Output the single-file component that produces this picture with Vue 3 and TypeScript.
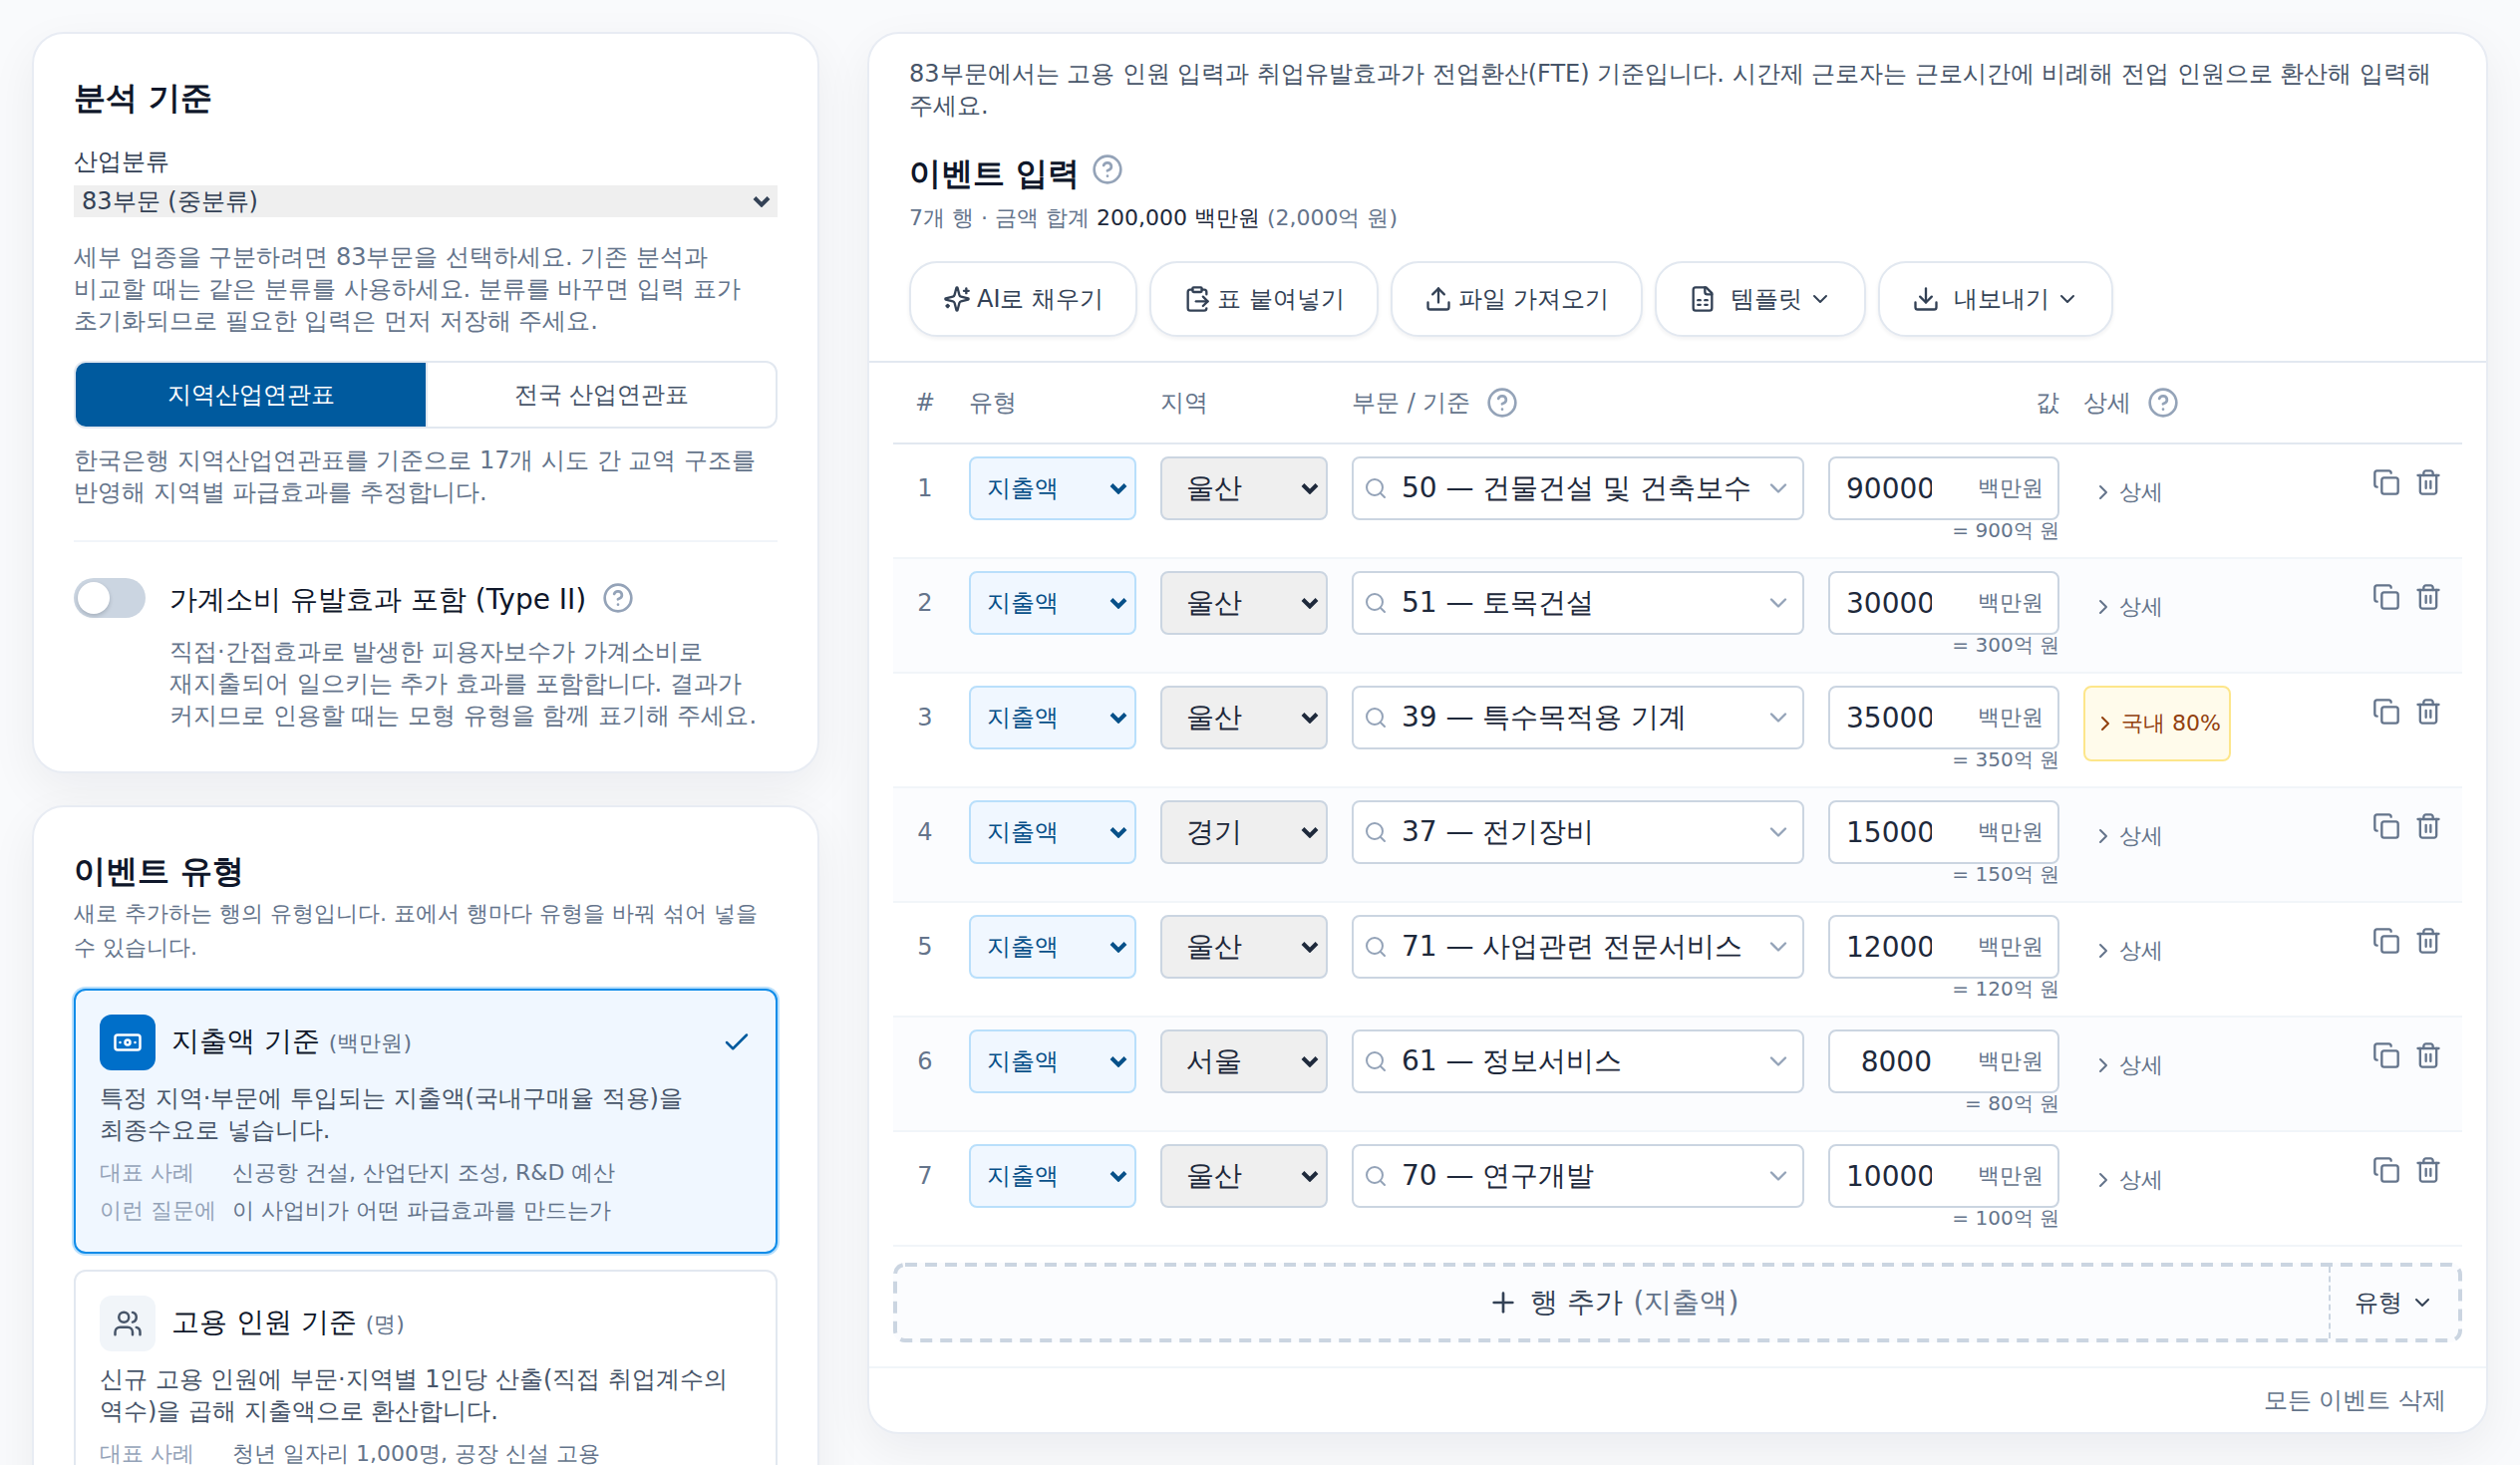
<script setup lang="ts">
import { ref } from 'vue'

type IconName =
  | 'help' | 'sparkles' | 'paste' | 'upload' | 'sheet' | 'download' | 'down' | 'right'
  | 'search' | 'copy' | 'trash' | 'plus' | 'check' | 'banknote' | 'users'

const icons: Record<IconName, string[]> = {
  help: ['M12 2a10 10 0 1 0 0 20a10 10 0 1 0 0-20Z', 'M9.09 9a3 3 0 0 1 5.83 1c0 2-3 3-3 3', 'M12 17h.01'],
  sparkles: [
    'M9.937 15.5A2 2 0 0 0 8.5 14.063l-6.135-1.582a.5.5 0 0 1 0-.962L8.5 9.936A2 2 0 0 0 9.937 8.5l1.582-6.135a.5.5 0 0 1 .963 0L14.063 8.5A2 2 0 0 0 15.5 9.937l6.135 1.581a.5.5 0 0 1 0 .964L15.5 14.063a2 2 0 0 0-1.437 1.437l-1.582 6.135a.5.5 0 0 1-.963 0z',
    'M20 3v4', 'M22 5h-4', 'M4 17v2', 'M5 18H3',
  ],
  paste: [
    'M9 2h6a1 1 0 0 1 1 1v2a1 1 0 0 1-1 1H9a1 1 0 0 1-1-1V3a1 1 0 0 1 1-1Z',
    'M8 4H6a2 2 0 0 0-2 2v14a2 2 0 0 0 2 2h12a2 2 0 0 0 2-2', 'M16 4h2a2 2 0 0 1 2 2v2', 'M11 14h10', 'm17 10 4 4-4 4',
  ],
  upload: ['M21 15v4a2 2 0 0 1-2 2H5a2 2 0 0 1-2-2v-4', 'm17 8-5-5-5 5', 'M12 3v12'],
  download: ['M21 15v4a2 2 0 0 1-2 2H5a2 2 0 0 1-2-2v-4', 'm7 10 5 5 5-5', 'M12 15V3'],
  sheet: [
    'M15 2H6a2 2 0 0 0-2 2v16a2 2 0 0 0 2 2h12a2 2 0 0 0 2-2V7Z', 'M14 2v4a2 2 0 0 0 2 2h4',
    'M8 13h2', 'M14 13h2', 'M8 17h2', 'M14 17h2',
  ],
  down: ['m6 9 6 6 6-6'],
  right: ['m9 18 6-6-6-6'],
  search: ['M11 3a8 8 0 1 0 0 16a8 8 0 1 0 0-16Z', 'm21 21-4.3-4.3'],
  copy: [
    'M10 8h10a2 2 0 0 1 2 2v10a2 2 0 0 1-2 2H10a2 2 0 0 1-2-2V10a2 2 0 0 1 2-2Z',
    'M4 16c-1.1 0-2-.9-2-2V4c0-1.1.9-2 2-2h10c1.1 0 2 .9 2 2',
  ],
  trash: ['M3 6h18', 'M19 6v14c0 1-1 2-2 2H7c-1 0-2-1-2-2V6', 'M8 6V4c0-1 1-2 2-2h4c1 0 2 1 2 2v2', 'M10 11v6', 'M14 11v6'],
  plus: ['M5 12h14', 'M12 5v14'],
  check: ['M20 6 9 17l-5-5'],
  banknote: [
    'M4 6h16a2 2 0 0 1 2 2v8a2 2 0 0 1-2 2H4a2 2 0 0 1-2-2V8a2 2 0 0 1 2-2Z',
    'M12 10a2 2 0 1 0 0 4a2 2 0 1 0 0-4Z', 'M6 12h.01', 'M18 12h.01',
  ],
  users: [
    'M16 21v-2a4 4 0 0 0-4-4H6a4 4 0 0 0-4 4v2', 'M9 3a4 4 0 1 0 0 8a4 4 0 1 0 0-8Z',
    'M22 21v-2a4 4 0 0 0-3-3.87', 'M16 3.13a4 4 0 0 1 0 7.75',
  ],
}

interface ToolButton { icon: IconName; label: string; menu: boolean }
const tools: ToolButton[] = [
  { icon: 'sparkles', label: 'AI로 채우기', menu: false },
  { icon: 'paste', label: '표 붙여넣기', menu: false },
  { icon: 'upload', label: '파일 가져오기', menu: false },
  { icon: 'sheet', label: '템플릿', menu: true },
  { icon: 'download', label: '내보내기', menu: true },
]

interface EventRow { region: string; sector: string; value: string; hint: string; detail?: string }
const rows = ref<EventRow[]>([
  { region: '울산', sector: '50 — 건물건설 및 건축보수', value: '90000', hint: '900' },
  { region: '울산', sector: '51 — 토목건설', value: '30000', hint: '300' },
  { region: '울산', sector: '39 — 특수목적용 기계', value: '35000', hint: '350', detail: '국내 80%' },
  { region: '경기', sector: '37 — 전기장비', value: '15000', hint: '150' },
  { region: '울산', sector: '71 — 사업관련 전문서비스', value: '12000', hint: '120' },
  { region: '서울', sector: '61 — 정보서비스', value: '8000', hint: '80' },
  { region: '울산', sector: '70 — 연구개발', value: '10000', hint: '100' },
])

interface EventKind { id: string; icon: IconName; name: string; unit: string; text: string; facts: [string, string][] }
const kinds: EventKind[] = [
  {
    id: 'spend', icon: 'banknote', name: '지출액 기준', unit: '(백만원)',
    text: '특정 지역·부문에 투입되는 지출액(국내구매율 적용)을 최종수요로 넣습니다.',
    facts: [['대표 사례', '신공항 건설, 산업단지 조성, R&D 예산'], ['이런 질문에', '이 사업비가 어떤 파급효과를 만드는가']],
  },
  {
    id: 'jobs', icon: 'users', name: '고용 인원 기준', unit: '(명)',
    text: '신규 고용 인원에 부문·지역별 1인당 산출(직접 취업계수의 역수)을 곱해 지출액으로 환산합니다.',
    facts: [['대표 사례', '청년 일자리 1,000명, 공장 신설 고용']],
  },
]

const kind = ref('spend')
const scope = ref('region')
const typeTwo = ref(false)
</script>

<template>
  <main class="page">
    <div class="side">
      <section class="card panel">
        <h2>분석 기준</h2>
        <label class="field-label" for="classification">산업분류</label>
        <div class="select-wrap plain">
          <select id="classification"><option>83부문 (중분류)</option></select>
          <svg class="arrow" viewBox="0 0 18 12"><path d="M2 2.500l7 7 7-7" /></svg>
        </div>
        <p class="note">세부 업종을 구분하려면 83부문을 선택하세요. 기존 분석과 비교할 때는 같은 분류를 사용하세요. 분류를 바꾸면 입력 표가 초기화되므로 필요한 입력은 먼저 저장해 주세요.</p>
        <div class="segments">
          <button type="button" :class="{ on: scope === 'region' }" @click="scope = 'region'">지역산업연관표</button>
          <button type="button" :class="{ on: scope === 'nation' }" @click="scope = 'nation'">전국 산업연관표</button>
        </div>
        <p class="note tight">한국은행 지역산업연관표를 기준으로 17개 시도 간 교역 구조를 반영해 지역별 파급효과를 추정합니다.</p>
        <div class="toggle-row">
          <input id="type-two" v-model="typeTwo" class="switch" type="checkbox" role="switch" />
          <div>
            <div class="toggle-title">
              <label for="type-two">가계소비 유발효과 포함 (Type II)</label>
              <button type="button" class="help" aria-label="도움말">
                <svg class="icon" viewBox="0 0 24 24"><path v-for="d in icons.help" :key="d" :d="d" /></svg>
              </button>
            </div>
            <p class="note">직접·간접효과로 발생한 피용자보수가 가계소비로 재지출되어 일으키는 추가 효과를 포함합니다. 결과가 커지므로 인용할 때는 모형 유형을 함께 표기해 주세요.</p>
          </div>
        </div>
      </section>

      <section class="card panel">
        <h2>이벤트 유형</h2>
        <p class="sub">새로 추가하는 행의 유형입니다. 표에서 행마다 유형을 바꿔 섞어 넣을 수 있습니다.</p>
        <div class="kinds">
          <label v-for="k in kinds" :key="k.id" class="kind" :class="{ on: kind === k.id }">
            <input v-model="kind" class="hidden-radio" type="radio" name="kind" :value="k.id" />
            <span class="kind-head">
              <span class="tile">
                <svg class="icon" viewBox="0 0 24 24"><path v-for="d in icons[k.icon]" :key="d" :d="d" /></svg>
              </span>
              <span class="kind-name">{{ k.name }} <small>{{ k.unit }}</small></span>
              <svg v-if="kind === k.id" class="icon mark" viewBox="0 0 24 24"><path v-for="d in icons.check" :key="d" :d="d" /></svg>
            </span>
            <span class="kind-text">{{ k.text }}</span>
            <span v-for="f in k.facts" :key="f[0]" class="fact"><span class="term">{{ f[0] }}</span><span>{{ f[1] }}</span></span>
          </label>
        </div>
      </section>
    </div>

    <section class="card main">
      <header class="main-head">
        <p class="notice">83부문에서는 고용 인원 입력과 취업유발효과가 전업환산(FTE) 기준입니다. 시간제 근로자는 근로시간에 비례해 전업 인원으로 환산해 입력해 주세요.</p>
        <div class="title">
          <h2>이벤트 입력</h2>
          <button type="button" class="help" aria-label="도움말">
            <svg class="icon" viewBox="0 0 24 24"><path v-for="d in icons.help" :key="d" :d="d" /></svg>
          </button>
        </div>
        <p class="count">7개 행 · 금액 합계 <span>200,000 백만원</span> (2,000억 원)</p>
        <div class="tools">
          <button v-for="t in tools" :key="t.label" type="button" class="tool" :class="{ menu: t.menu }">
            <svg class="icon" viewBox="0 0 24 24"><path v-for="d in icons[t.icon]" :key="d" :d="d" /></svg>
            <span>{{ t.label }}</span>
            <svg v-if="t.menu" class="icon chev" viewBox="0 0 24 24"><path v-for="d in icons.down" :key="d" :d="d" /></svg>
          </button>
        </div>
      </header>

      <div class="sheet">
        <table>
          <colgroup>
            <col class="c-num" /><col class="c-pick" /><col class="c-pick" /><col class="c-sector" />
            <col class="c-value" /><col class="c-detail" /><col class="c-act" />
          </colgroup>
          <thead>
            <tr>
              <th class="num">#</th>
              <th>유형</th>
              <th>지역</th>
              <th>
                <span class="th-help">부문 / 기준
                  <button type="button" class="help" aria-label="도움말">
                    <svg class="icon" viewBox="0 0 24 24"><path v-for="d in icons.help" :key="d" :d="d" /></svg>
                  </button>
                </span>
              </th>
              <th class="right">값</th>
              <th>
                <span class="th-help">상세
                  <button type="button" class="help" aria-label="도움말">
                    <svg class="icon" viewBox="0 0 24 24"><path v-for="d in icons.help" :key="d" :d="d" /></svg>
                  </button>
                </span>
              </th>
              <th></th>
            </tr>
          </thead>
          <tbody>
            <tr v-for="(r, i) in rows" :key="i">
              <td class="num"><span>{{ i + 1 }}</span></td>
              <td>
                <div class="select-wrap kind-pick">
                  <select aria-label="유형"><option>지출액</option></select>
                  <svg class="arrow" viewBox="0 0 18 12"><path d="M2 2.500l7 7 7-7" /></svg>
                </div>
              </td>
              <td>
                <div class="select-wrap region-pick">
                  <select aria-label="지역"><option>{{ r.region }}</option></select>
                  <svg class="arrow" viewBox="0 0 18 12"><path d="M2 2.500l7 7 7-7" /></svg>
                </div>
              </td>
              <td>
                <div class="box sector">
                  <svg class="icon lens" viewBox="0 0 24 24"><path v-for="d in icons.search" :key="d" :d="d" /></svg>
                  <input v-model="r.sector" type="text" aria-label="부문" />
                  <svg class="icon" viewBox="0 0 24 24"><path v-for="d in icons.down" :key="d" :d="d" /></svg>
                </div>
              </td>
              <td>
                <div class="box amount">
                  <input v-model="r.value" type="text" inputmode="numeric" aria-label="값" />
                  <span class="unit">백만원</span>
                </div>
                <p class="hint">= {{ r.hint }}억 원</p>
              </td>
              <td>
                <button type="button" class="detail" :class="{ chip: r.detail }">
                  <svg class="icon" viewBox="0 0 24 24"><path v-for="d in icons.right" :key="d" :d="d" /></svg>
                  <span>{{ r.detail ?? '상세' }}</span>
                </button>
              </td>
              <td class="acts">
                <div>
                  <button type="button" aria-label="복제"><svg class="icon" viewBox="0 0 24 24"><path v-for="d in icons.copy" :key="d" :d="d" /></svg></button>
                  <button type="button" aria-label="삭제"><svg class="icon" viewBox="0 0 24 24"><path v-for="d in icons.trash" :key="d" :d="d" /></svg></button>
                </div>
              </td>
            </tr>
          </tbody>
        </table>

        <div class="add">
          <svg class="dashes" aria-hidden="true"><rect x="2" y="2" rx="10" /></svg>
          <button type="button" class="add-main">
            <svg class="icon" viewBox="0 0 24 24"><path v-for="d in icons.plus" :key="d" :d="d" /></svg>
            <span>행 추가</span>
            <span class="muted">(지출액)</span>
          </button>
          <button type="button" class="add-kind">
            <span>유형</span>
            <svg class="icon" viewBox="0 0 24 24"><path v-for="d in icons.down" :key="d" :d="d" /></svg>
          </button>
        </div>
      </div>

      <footer><button type="button">모든 이벤트 삭제</button></footer>
    </section>
  </main>
</template>

<style>
body {
  margin: 0;
  background: #f9fafc;
}
</style>

<style scoped>
.page,
.page * {
  box-sizing: border-box;
}
.page {
  display: grid;
  grid-template-columns: minmax(0, 790fr) minmax(0, 1626fr);
  align-items: start;
  gap: 48px;
  height: 100vh;
  padding: 32px;
  overflow: hidden;
  color: #1e293b;
  font-family: "DejaVu Sans", sans-serif;
  font-size: 24px;
  line-height: 32px;
  word-break: keep-all;
}
h2,
p {
  margin: 0;
}
button,
input,
select {
  margin: 0;
  padding: 0;
  border: 0;
  background: none;
  color: inherit;
  font: inherit;
}
.icon {
  flex: none;
  width: 28px;
  height: 28px;
  fill: none;
  stroke: currentColor;
  stroke-width: 2;
  stroke-linecap: round;
  stroke-linejoin: round;
}
.card {
  border: 2px solid #e8ecf3;
  border-radius: 32px;
  background: #fff;
  box-shadow: 0 16px 48px rgba(15, 23, 42, 0.06);
}
.side {
  display: grid;
  gap: 32px;
}
.panel {
  padding: 40px;
}
h2 {
  color: #0f172a;
  font-size: 32px;
  font-weight: 700;
  line-height: 48px;
}
.field-label {
  display: block;
  margin: 24px 0 8px;
  color: #334155;
}
.select-wrap {
  position: relative;
}
.select-wrap select {
  display: block;
  width: 100%;
  appearance: none;
}
.arrow {
  position: absolute;
  top: 0;
  right: 9px;
  bottom: 0;
  width: 18px;
  height: 12px;
  margin: auto 0;
  fill: none;
  stroke: currentColor;
  stroke-width: 4;
  pointer-events: none;
}
.plain {
  color: #334155;
}
.plain select {
  height: 32px;
  padding: 0 8px;
  background: #efefef;
}
.plain .arrow {
  right: 7px;
}
.note {
  margin-top: 24px;
  color: #64748b;
}
.segments {
  display: grid;
  grid-template-columns: 1fr 1fr;
  height: 68px;
  margin-top: 24px;
  border: 2px solid #e2e8f0;
  border-radius: 12px;
  overflow: hidden;
  color: #475569;
}
.segments button + button {
  border-left: 2px solid #e2e8f0;
}
.segments .on {
  background: #005a9e;
  color: #fff;
}
.note.tight {
  margin-top: 16px;
}
.toggle-row {
  display: grid;
  grid-template-columns: 72px 1fr;
  gap: 24px;
  margin-top: 32px;
  padding-top: 36px;
  border-top: 2px solid #f1f5f9;
}
.switch {
  display: block;
  width: 72px;
  height: 40px;
  padding: 4px;
  border-radius: 20px;
  background: #cbd5e1;
  appearance: none;
}
.switch::before {
  display: block;
  width: 32px;
  height: 32px;
  border-radius: 50%;
  background: #fff;
  box-shadow: 0 2px 4px rgba(15, 23, 42, 0.2);
  content: "";
}
.toggle-title {
  display: flex;
  align-items: flex-start;
  gap: 12px;
  color: #0f172a;
  font-size: 28px;
  line-height: 44px;
}
.help {
  display: flex;
  align-items: center;
  justify-content: center;
  width: 40px;
  height: 40px;
  color: #94a3b8;
}
.help .icon {
  width: 32px;
  height: 32px;
}
.toggle-row .note {
  margin-top: 14px;
}
.sub {
  color: #64748b;
  font-size: 22px;
  line-height: 34px;
  margin-top: 2px;
}
.kinds {
  display: grid;
  gap: 16px;
  margin-top: 24px;
}
.kind {
  position: relative;
  display: block;
  padding: 24px;
  border: 2px solid #e2e8f0;
  border-radius: 12px;
}
.kind.on {
  border-color: #0f8ce9;
  background: #f0f7ff;
  box-shadow: 0 0 0 2px #b9dffb;
}
.hidden-radio {
  position: absolute;
  opacity: 0;
}
.kind-head {
  display: flex;
  align-items: center;
  gap: 16px;
}
.tile {
  display: flex;
  align-items: center;
  justify-content: center;
  width: 56px;
  height: 56px;
  border-radius: 12px;
  background: #f1f5f9;
  color: #475569;
}
.on .tile {
  background: #006fc9;
  color: #fff;
}
.tile .icon,
.mark {
  width: 30px;
  height: 30px;
}
.kind-name {
  flex: 1;
  color: #0f172a;
  font-size: 28px;
}
.kind-name small {
  color: #64748b;
  font-size: 22px;
}
.mark {
  color: #005a9e;
}
.kind-text {
  display: block;
  margin: 12px 0 10px;
  color: #475569;
}
.fact {
  display: flex;
  gap: 16px;
  color: #64748b;
  font-size: 22px;
  line-height: 34px;
}
.fact + .fact {
  margin-top: 4px;
}
.term {
  width: 117px;
  color: #94a3b8;
  white-space: nowrap;
}
.main-head {
  padding: 24px 40px;
  border-bottom: 2px solid #e2e8f0;
}
.notice {
  color: #475569;
}
.title {
  display: flex;
  align-items: flex-start;
  gap: 8px;
  margin-top: 28px;
}
.count {
  margin-top: 4px;
  color: #64748b;
  font-size: 22px;
  line-height: 34px;
}
.count span {
  color: #1e293b;
}
.tools {
  display: flex;
  flex-wrap: wrap;
  gap: 12px;
  margin-top: 26px;
}
.tool {
  display: flex;
  align-items: center;
  gap: 6px;
  height: 76px;
  padding: 0 32px;
  border: 2px solid #e2e8f0;
  border-radius: 28px;
  background: #fff;
  color: #334155;
  box-shadow: 0 2px 4px rgba(15, 23, 42, 0.06);
}
.tool.menu .icon:first-child {
  margin-right: 8px;
}
.icon.chev {
  width: 24px;
  height: 24px;
}
.sheet {
  padding: 0 24px 24px;
}
table {
  width: 100%;
  border-collapse: separate;
  border-spacing: 0;
  table-layout: fixed;
}
.c-num { width: 64px; }
.c-pick { width: 192px; }
.c-value { width: 256px; }
.c-detail { width: 280px; }
.c-act { width: 112px; }
th {
  height: 82px;
  padding: 0 12px;
  border-bottom: 2px solid #e2e8f0;
  color: #64748b;
  font-weight: 400;
  text-align: left;
}
th.num,
td.num {
  padding: 0;
  text-align: center;
}
th.right {
  text-align: right;
}
.th-help {
  display: flex;
  align-items: center;
  gap: 12px;
}
td {
  height: 115px;
  padding: 12px 12px 0;
  border-bottom: 2px solid #f1f5f9;
  vertical-align: top;
}
tr:nth-child(even) td {
  background: #fbfcfe;
}
td.num {
  padding-top: 12px;
  color: #64748b;
  line-height: 64px;
}
.kind-pick select,
.region-pick select {
  height: 64px;
  border: 2px solid #cbd5e1;
  border-radius: 8px;
}
.kind-pick {
  color: #075089;
}
.kind-pick select {
  padding: 0 16px;
  border-color: #b9dffb;
  background: #f0f7ff;
}
.region-pick select {
  padding: 0 24px;
  background: #efefef;
  font-size: 28px;
}
.box {
  display: flex;
  align-items: center;
  height: 64px;
  border: 2px solid #cbd5e1;
  border-radius: 8px;
  background: #fff;
}
.box input {
  flex: 1;
  min-width: 0;
  height: 60px;
  font-size: 28px;
  outline: none;
}
.sector {
  gap: 14px;
  padding: 0 10px;
  color: #94a3b8;
}
.sector .lens {
  width: 24px;
  height: 24px;
}
.sector input,
.amount input {
  color: #1e293b;
}
.amount {
  padding: 0 14px 0 16px;
  color: #64748b;
}
.amount input {
  margin-right: 46px;
  text-align: right;
}
.unit {
  font-size: 22px;
}
.hint {
  color: #64748b;
  font-size: 20px;
  line-height: 20px;
  text-align: right;
}
.detail {
  display: flex;
  align-items: center;
  gap: 4px;
  height: 72px;
  padding: 0 8px;
  border-radius: 8px;
  color: #64748b;
  font-size: 22px;
  white-space: nowrap;
}
.detail .icon {
  width: 24px;
  height: 24px;
}
.detail.chip {
  height: 76px;
  border: 2px solid #fde68a;
  background: #fffbeb;
  color: #92400e;
}
.acts div {
  display: flex;
  justify-content: flex-end;
  gap: 14px;
  padding: 12px 8px 0 0;
  color: #64748b;
}
.acts button {
  display: flex;
}
.add {
  position: relative;
  display: flex;
  height: 80px;
  margin-top: 16px;
  padding: 4px;
  border-radius: 12px;
  background: #fbfcfe;
}
.dashes {
  position: absolute;
  inset: 0;
  width: 100%;
  height: 100%;
  fill: none;
  stroke: #cbd5e1;
  stroke-width: 4;
  stroke-dasharray: 12 8;
  pointer-events: none;
}
.dashes rect {
  width: calc(100% - 4px);
  height: calc(100% - 4px);
}
.add button {
  display: flex;
  align-items: center;
}
.add-main {
  flex: 1;
  justify-content: center;
  gap: 11px;
  color: #334155;
  font-size: 28px;
}
.add-main .icon {
  width: 32px;
  height: 32px;
}
.muted {
  color: #64748b;
}
.add-kind {
  gap: 8px;
  padding: 0 24px;
  border-left: 2px dashed #cbd5e1;
  color: #334155;
}
.add-kind .icon {
  width: 24px;
  height: 24px;
}
footer {
  display: flex;
  align-items: center;
  justify-content: flex-end;
  height: 66px;
  padding: 0 40px;
  border-top: 2px solid #f1f5f9;
  color: #64748b;
}
</style>
